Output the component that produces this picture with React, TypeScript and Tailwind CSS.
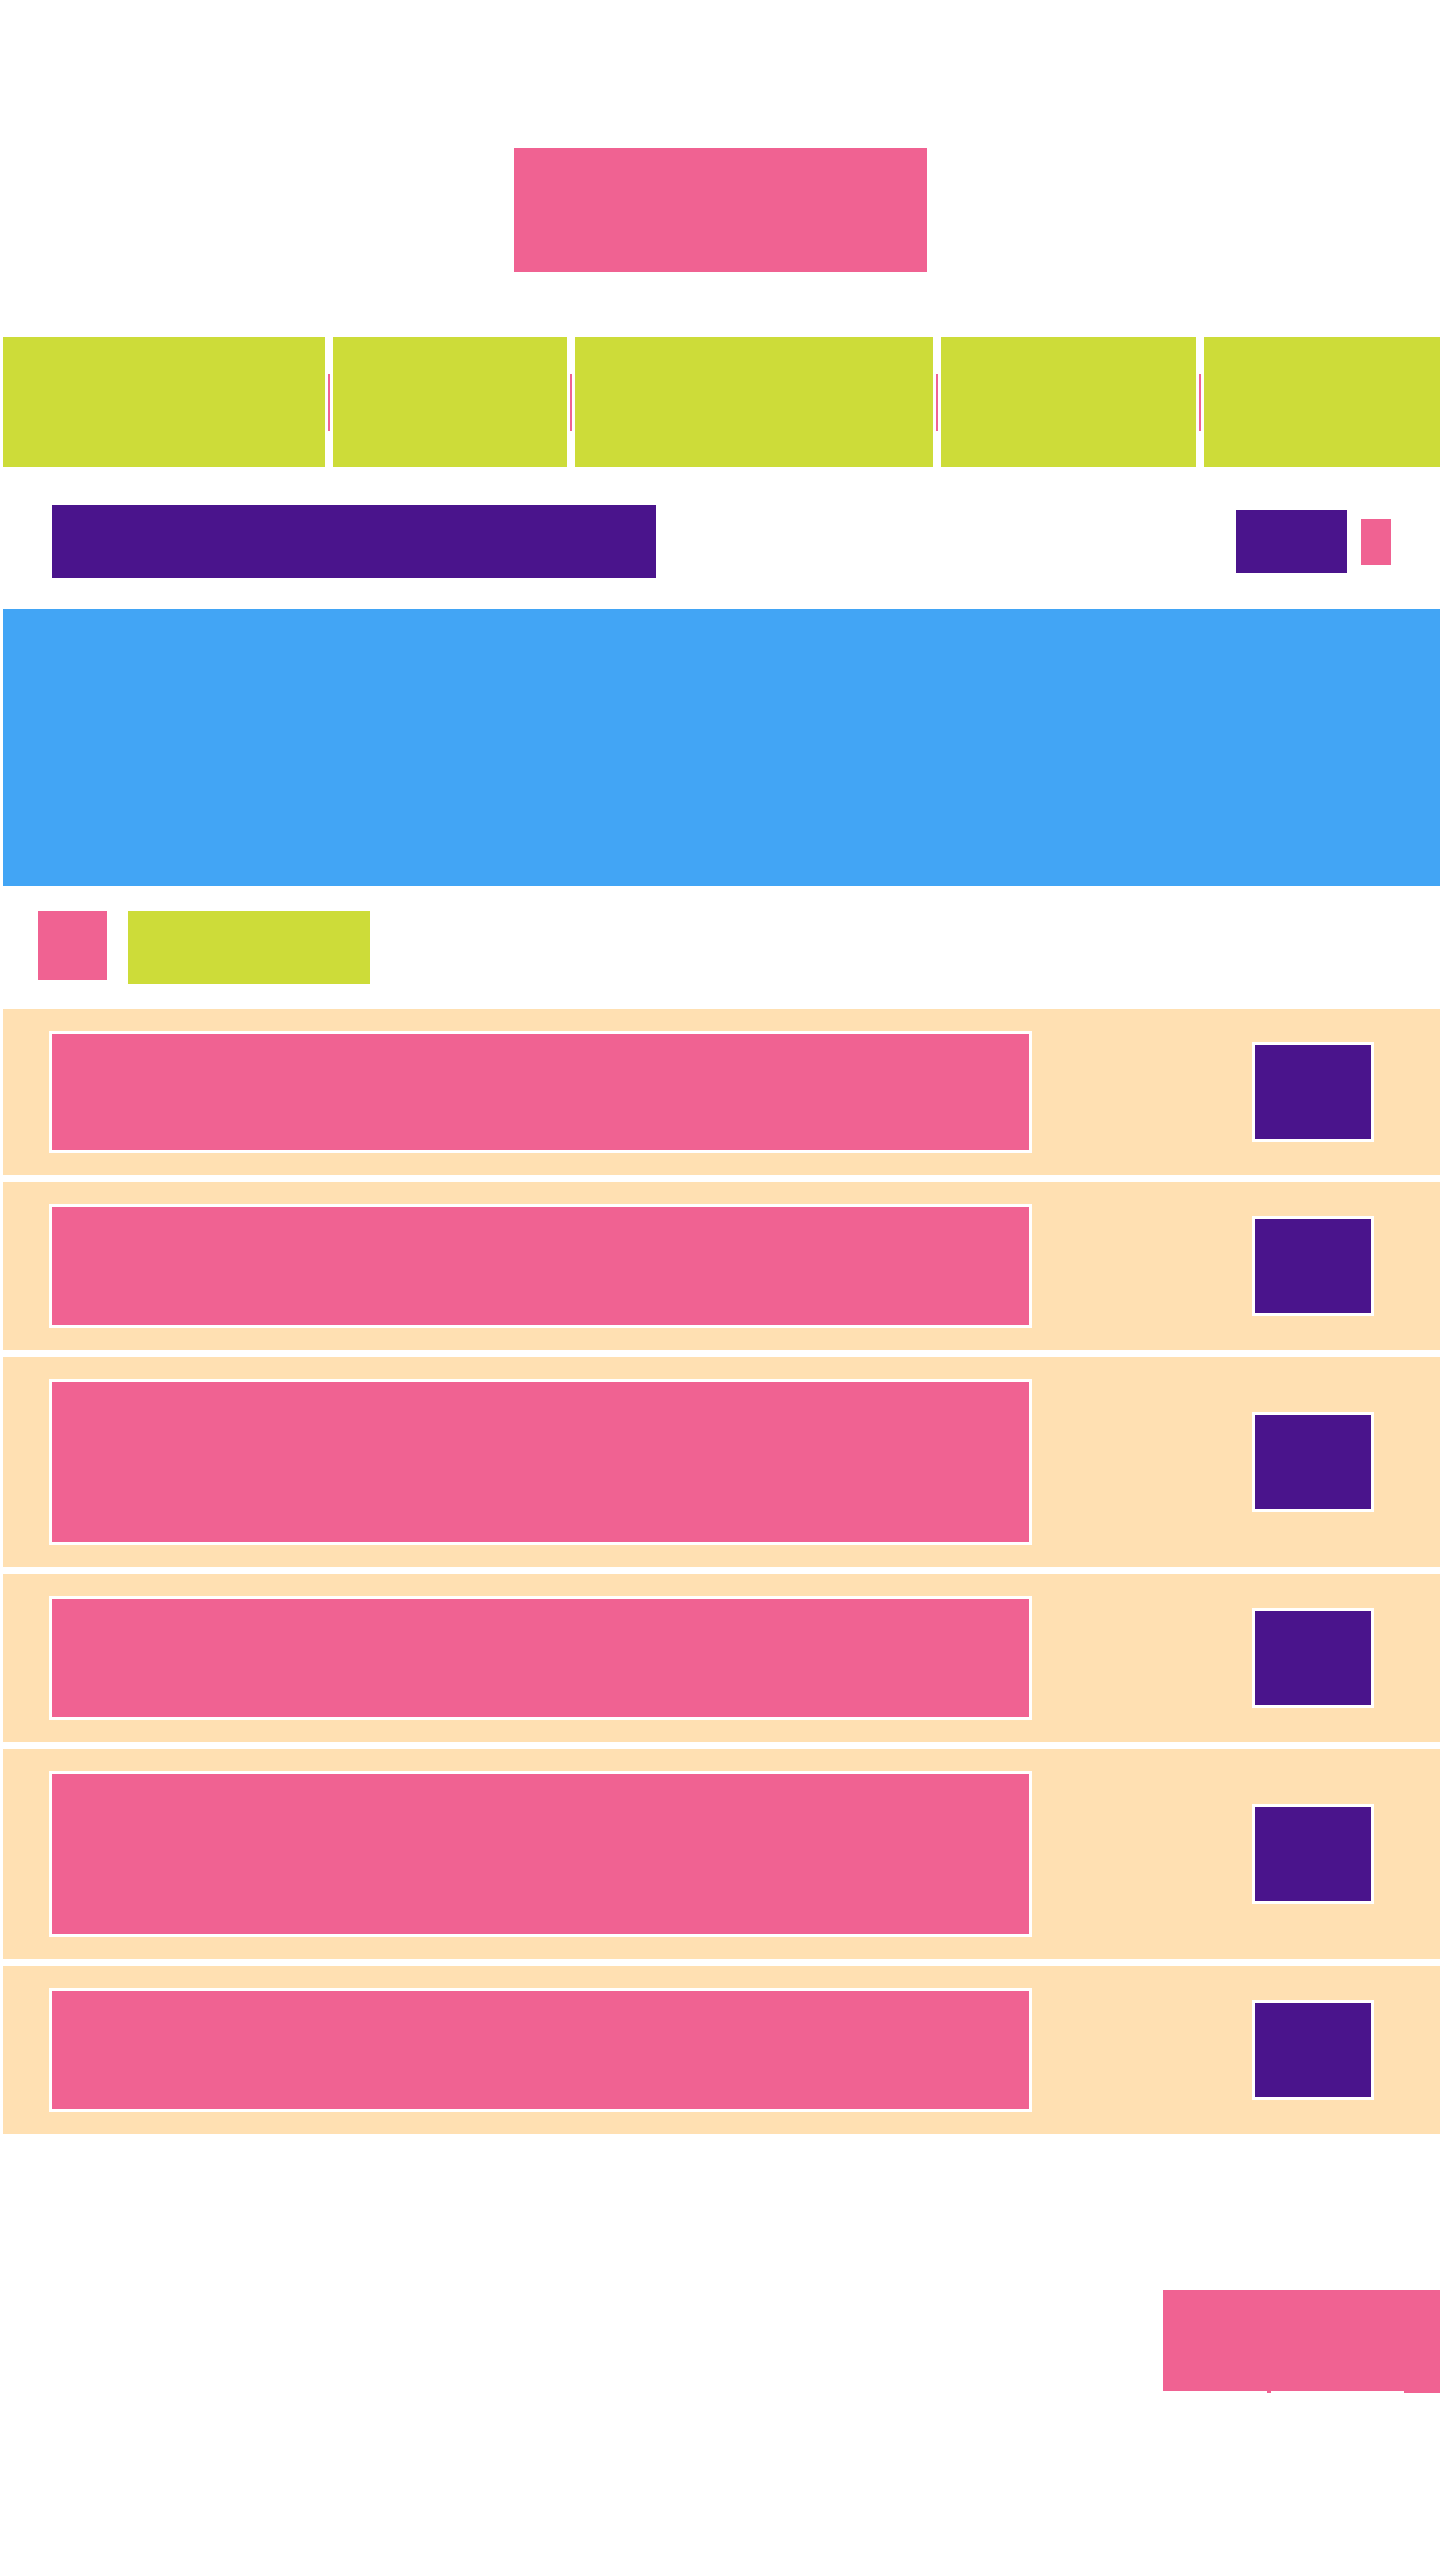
const PINK = "bg-[#f06292]";

const navItems = [322, 234, 358, 255, 236];

// pink block height per list row (the first one sits 2px shorter)
const rows = ["h-[122px]", "h-[124px]", "h-[166px]", "h-[124px]", "h-[166px]", "h-[124px]"];

function NavBar() {
  return (
    <nav className="mt-[65px] ml-[3px] flex h-[130px]">
      {navItems.map((w, i) => (
        <div key={i} className="flex h-full">
          {i > 0 && (
            <div className="flex w-[8px] items-center justify-center">
              <div className={`h-[57px] w-[2px] ${PINK}`} />
            </div>
          )}
          <div className="h-full bg-[#cddc39]" style={{ width: w }} />
        </div>
      ))}
    </nav>
  );
}

function ListRow({ h }: { h: string }) {
  return (
    <div className="flex items-center justify-between bg-[#ffe0b2] py-[22px] pl-[46px] pr-[66px]">
      <div className={`w-[983px] border-[3px] border-white ${PINK} ${h}`} />
      <div className="h-[100px] w-[122px] border-[3px] border-white bg-[#4a148c]" />
    </div>
  );
}

export default function App() {
  return (
    <div className="min-h-[2560px] w-[1440px] overflow-hidden bg-white">
      <header className="flex justify-center pt-[148px]">
        <div className={`h-[124px] w-[413px] ${PINK}`} />
      </header>

      <NavBar />

      <div className="mt-[38px] flex items-center justify-between pl-[52px] pr-[49px]">
        <div className="h-[73px] w-[604px] bg-[#4a148c]" />
        <div className="flex items-center gap-[14px]">
          <div className="h-[63px] w-[111px] bg-[#4a148c]" />
          <div className={`h-[46px] w-[30px] ${PINK}`} />
        </div>
      </div>

      <section className="mt-[31px] ml-[3px] h-[277px] bg-[#42a5f5]" />

      <div className="mt-[25px] flex items-start gap-[21px] pl-[38px]">
        <div className={`h-[69px] w-[69px] ${PINK}`} />
        <div className="h-[73px] w-[242px] bg-[#cddc39]" />
      </div>

      <div className="mt-[25px] ml-[3px] flex flex-col gap-[7px]">
        {rows.map((h, i) => (
          <ListRow key={i} h={h} />
        ))}
      </div>

      <div className="mt-[156px] flex justify-end">
        <div className={`relative h-[101px] w-[277px] ${PINK}`}>
          {/* little ragged bits under the button edge */}
          <span className={`absolute left-[104px] top-full h-[2px] w-[4px] ${PINK}`} />
          <span className={`absolute right-0 top-full h-[2px] w-[36px] ${PINK}`} />
        </div>
      </div>
    </div>
  );
}
